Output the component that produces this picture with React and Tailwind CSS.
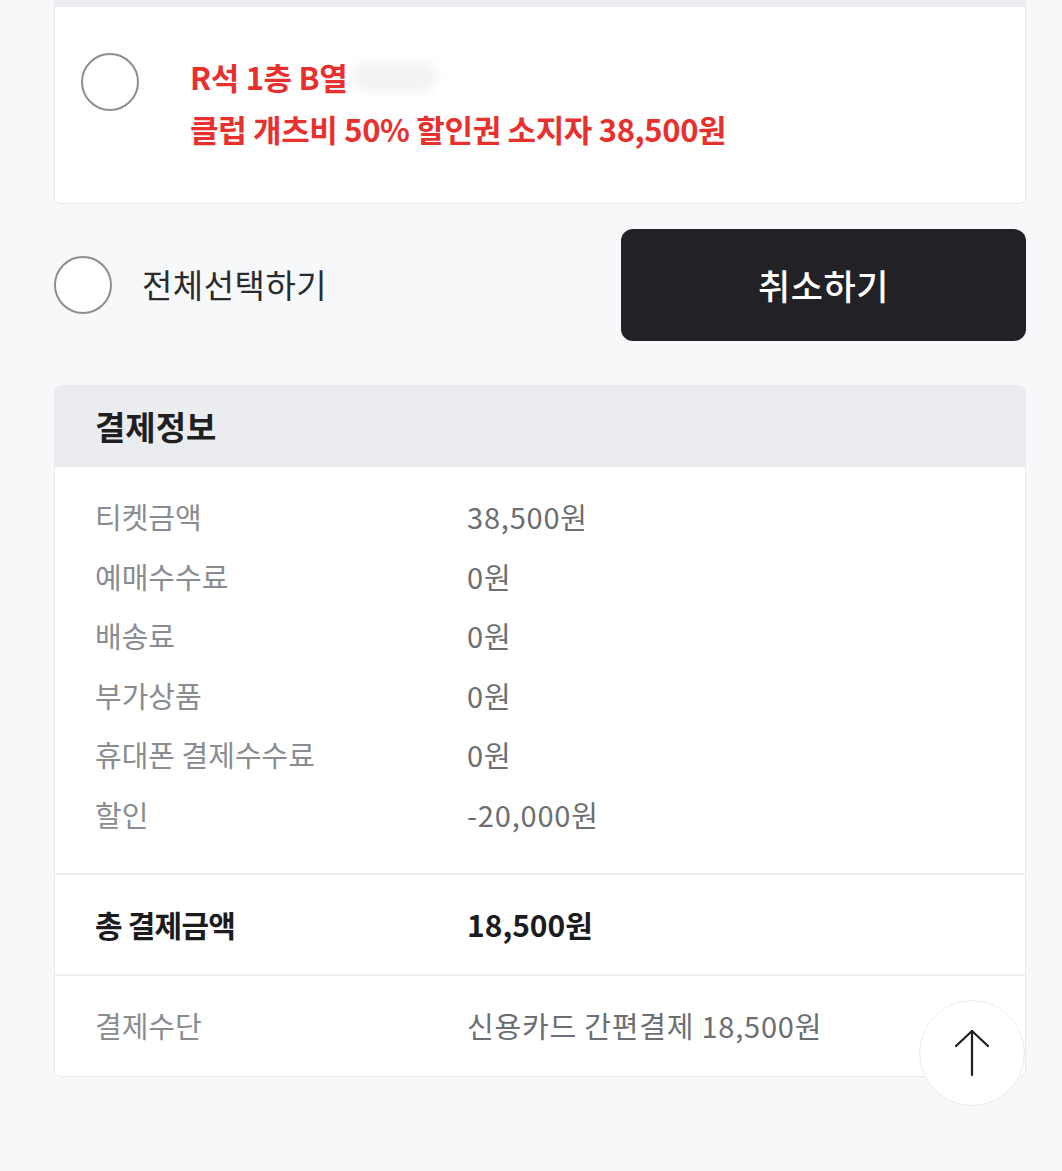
import { useState } from 'react'

const font = { fontFamily: '"Noto Sans CJK KR", "Noto Sans", sans-serif' }

const rows = [
  ['티켓금액', '38,500원'],
  ['예매수수료', '0원'],
  ['배송료', '0원'],
  ['부가상품', '0원'],
  ['휴대폰 결제수수료', '0원'],
  ['할인', '-20,000원'],
]

const Radio = ({ checked, onClick }) => (
  <button
    onClick={onClick}
    className={`h-[58px] w-[58px] shrink-0 rounded-full border-2 bg-white ${
      checked ? 'border-[#e8312f]' : 'border-[#8d8e91]'
    }`}
  />
)

export default function App() {
  const [seat, setSeat] = useState(false)
  const [all, setAll] = useState(false)

  return (
    <div
      className="relative min-h-[1171px] w-full overflow-hidden bg-[#f7f8fa] pl-[54px] pr-[36px]"
      style={font}
    >
      {/* 좌석 카드 */}
      <div className="overflow-hidden rounded-b-[6px] border border-t-0 border-[#e9eaed] bg-white">
        <div className="h-[7px] bg-[#ebecf0]" />
        <div className="flex h-[196px] items-start pl-[26px] pt-[44px]">
          <div className="mt-[2px]">
            <Radio checked={seat} onClick={() => setSeat(!seat)} />
          </div>
          <div className="ml-[51px] text-[31px] font-bold leading-[52px] tracking-[-0.35px] text-[#e8312f]">
            <div className="flex items-center">
              <span>R석 1층 B열</span>
              <span className="ml-[6px] inline-block h-[30px] w-[84px] rounded-full bg-[#f3f3f3] blur-[5px]" />
            </div>
            <div>클럽 개츠비 50% 할인권 소지자 38,500원</div>
          </div>
        </div>
      </div>

      {/* 전체선택 / 취소 */}
      <div className="mt-[25px] flex items-center justify-between">
        <div className="flex items-center">
          <Radio checked={all} onClick={() => setAll(!all)} />
          <span className="ml-[30px] text-[33px] tracking-[0.5px] text-[#2b2b2e]">전체선택하기</span>
        </div>
        <button className="h-[112px] w-[405px] rounded-[12px] bg-[#222226] text-[35px] font-medium tracking-[0.5px] text-white">
          취소하기
        </button>
      </div>

      {/* 결제정보 */}
      <div className="mt-[44px] overflow-hidden rounded-[7px] border border-[#e9eaed] bg-white">
        <div className="flex h-[81px] items-center bg-[#ebecf0] pl-[40px] text-[33px] font-bold text-[#1f1f22]">
          결제정보
        </div>
        <div className="pb-[28px] pt-[20px]">
          {rows.map(([label, value]) => (
            <div key={label} className="flex h-[59.6px] items-center text-[29px]">
              <span className="w-[412px] pl-[40px] text-[#8a8c90]">{label}</span>
              <span className="tracking-[0.8px] text-[#6c6e72]">{value}</span>
            </div>
          ))}
        </div>
        <div className="flex h-[101px] items-center border-t-2 border-[#eeeff1] text-[30px] font-bold tracking-[-0.8px] text-[#1c1c1f]">
          <span className="w-[412px] pl-[40px]">총 결제금액</span>
          <span className="tracking-[0px]">18,500원</span>
        </div>
        <div className="flex h-[102px] items-center border-t-2 border-[#eeeff1] text-[29px]">
          <span className="w-[412px] pl-[40px] text-[#8a8c90]">결제수단</span>
          <span className="tracking-[0.8px] text-[#6c6e72]">신용카드 간편결제 18,500원</span>
        </div>
      </div>

      {/* 맨 위로 */}
      <button className="absolute left-[919px] top-[1000px] flex h-[106px] w-[106px] items-center justify-center rounded-full border border-[#ebebeb] bg-white">
        <svg width="40" height="50" viewBox="0 0 40 50" fill="none" stroke="#1e1e20" strokeWidth="2.2" strokeLinecap="round" strokeLinejoin="round">
          <path d="M20 3 L20 47" />
          <path d="M4 18 L20 3 L36 18" />
        </svg>
      </button>
    </div>
  )
}
